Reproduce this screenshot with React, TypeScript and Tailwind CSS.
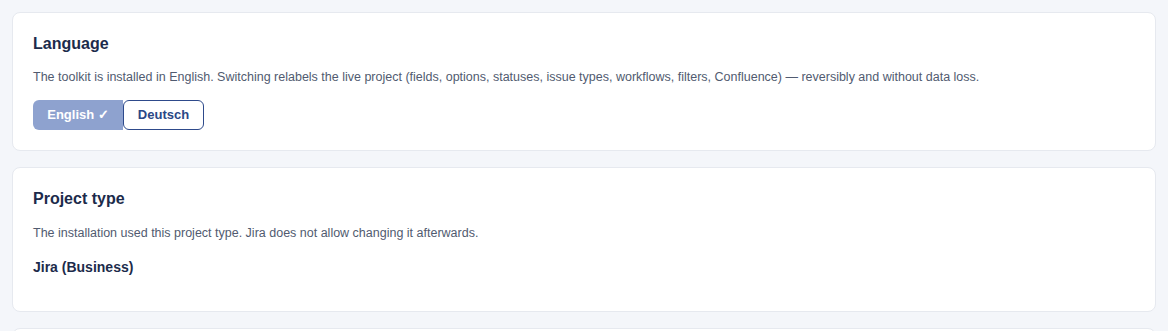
import React from 'react';

const Card: React.FC<{ title: string; children: React.ReactNode; className?: string }> = ({ title, children, className }) => (
  <section className={`bg-white rounded-lg border border-[#e6e9ef] px-5 pt-5 ${className ?? 'pb-5'}`}>
    <h2 className="text-[16px] leading-[22px] font-bold text-[#1c2b4b]">{title}</h2>
    {children}
  </section>
);

export default function App() {
  return (
    <div className="min-h-screen bg-[#f4f6fa] px-3 pt-3 flex flex-col gap-4 font-['Liberation_Sans',Arial,sans-serif]">
      <Card title="Language">
        <p className="mt-3 text-[12.5px] leading-5 text-[#515b70]">
          The toolkit is installed in English. Switching relabels the live project (fields, options, statuses, issue types, workflows, filters, Confluence) — reversibly and without data loss.
        </p>
        <div className="mt-[13px] flex">
          <button className="h-[30px] w-[90px] rounded-l-md bg-[#8ea2cf] text-white text-[13px] font-bold">
            English ✓
          </button>
          <button className="h-[30px] w-[81px] rounded-md border border-[#2e4a8b] bg-white text-[#2a4786] text-[13px] font-bold">
            Deutsch
          </button>
        </div>
      </Card>
      <Card title="Project type" className="pb-[34px]">
        <p className="mt-[13px] text-[12.5px] leading-5 text-[#515b70]">
          The installation used this project type. Jira does not allow changing it afterwards.
        </p>
        <p className="mt-[14px] text-[14px] leading-5 font-bold text-[#1c2b4b]">Jira (Business)</p>
      </Card>
      <section className="bg-white rounded-lg border border-[#e6e9ef] h-[40px]" />
    </div>
  );
}
